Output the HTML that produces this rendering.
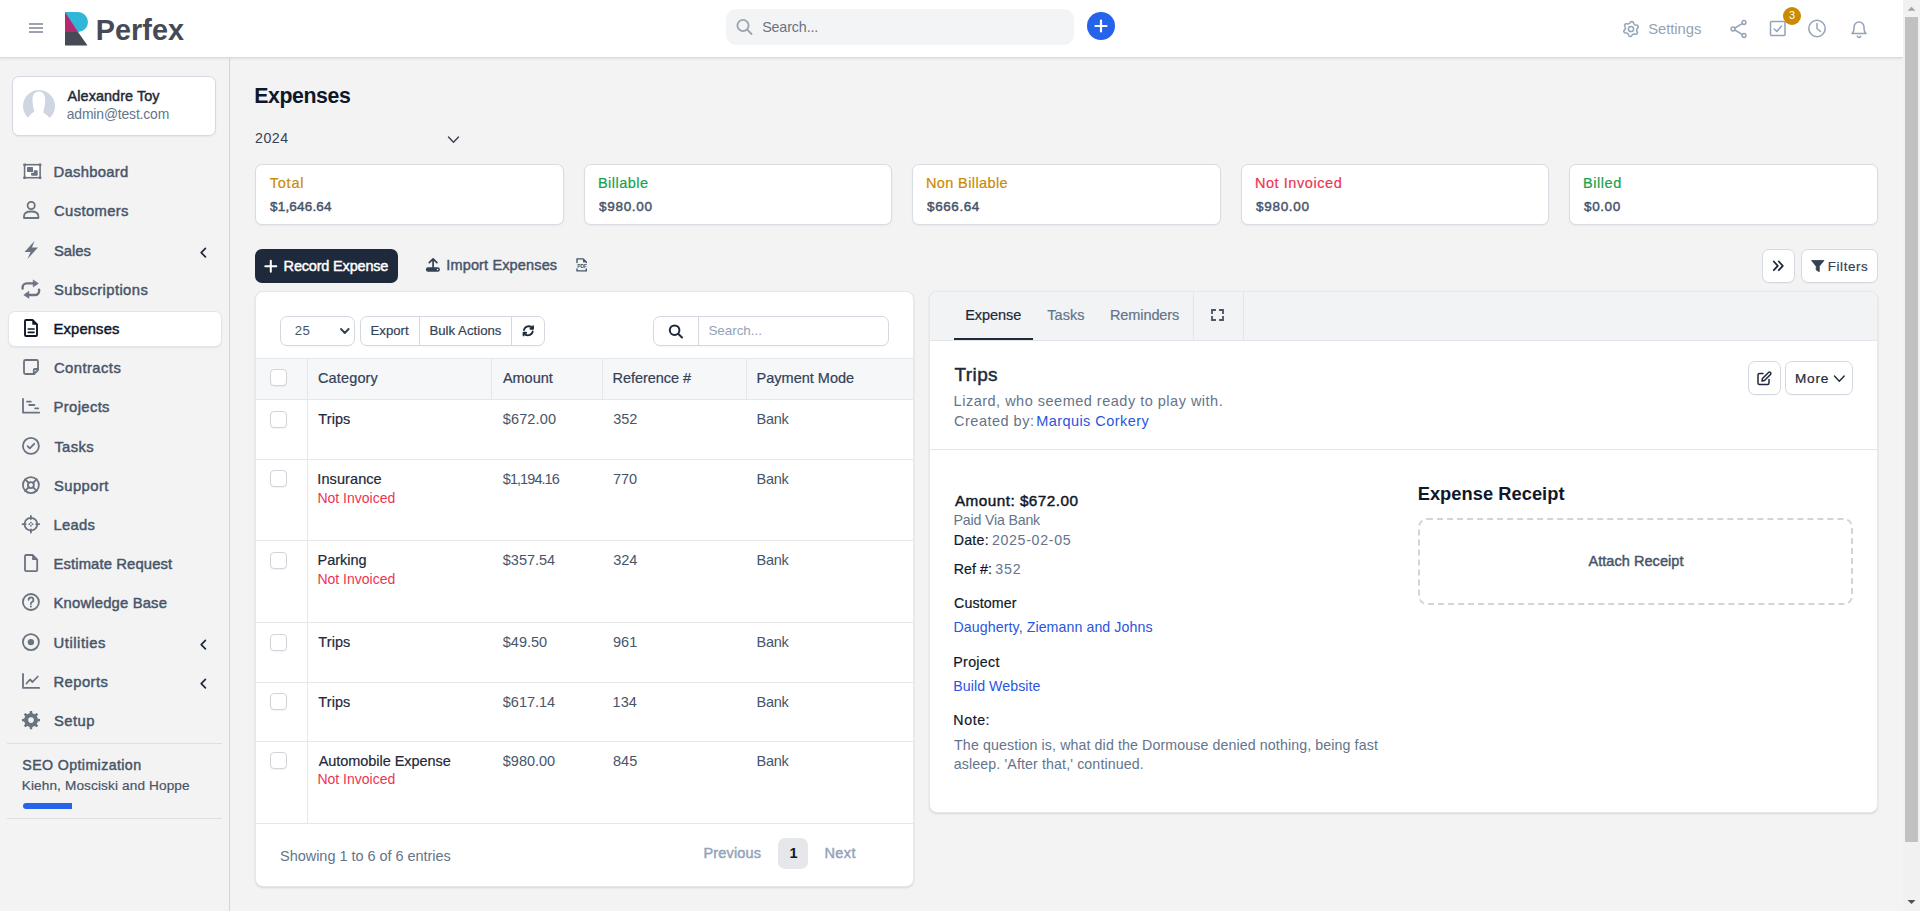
<!DOCTYPE html>
<html><head><meta charset="utf-8"><title>Expenses</title>
<style>
*{box-sizing:border-box;margin:0;padding:0}
html,body{width:1920px;height:911px;overflow:hidden}
body{font-family:"Liberation Sans",sans-serif;background:#f3f3f3;position:relative}
.b{position:absolute}
.t{position:absolute;white-space:nowrap}
svg{position:absolute;left:0;top:0}
</style></head><body>
<div class="b" style="left:0.00px;top:0.00px;width:1903.00px;height:58.00px;background:#fff;border-bottom:1px solid #dadada;box-shadow:0 1px 3px rgba(0,0,0,.07)"></div>
<div class="b" style="left:229.00px;top:58.00px;width:1.00px;height:853.00px;background:#cfd6e1"></div>
<div class="b" style="left:1903.00px;top:0.00px;width:17.00px;height:911.00px;background:#f1f1f1"></div>
<div class="b" style="left:1905.00px;top:17.00px;width:13.00px;height:825.00px;background:#c1c1c1"></div>
<div class="b" style="left:726.00px;top:9.00px;width:348.00px;height:36.00px;background:#f3f4f6;border-radius:10px"></div>
<div class="b" style="left:1087.00px;top:12.00px;width:28.00px;height:28.00px;background:#2563eb;border-radius:50%"></div>
<div class="b" style="left:1783.00px;top:7.00px;width:18.00px;height:18.00px;background:#ca8a04;border-radius:50%"></div>
<div class="b" style="left:12.00px;top:76.00px;width:204.00px;height:60.00px;background:#fff;border:1px solid #d5dae2;border-radius:7px;box-shadow:0 1px 2px rgba(0,0,0,.06)"></div>
<div class="b" style="left:23.00px;top:90.00px;width:32.00px;height:32.00px;background:#cfd6e2;border-radius:50%"></div>
<div class="b" style="left:8.00px;top:311.00px;width:214.00px;height:36.00px;background:#fff;border:1px solid #e1e4e9;border-radius:7px;box-shadow:0 1px 2px rgba(0,0,0,.06)"></div>
<div class="b" style="left:7.00px;top:743.00px;width:215.00px;height:1.00px;background:#dcdfe4"></div>
<div class="b" style="left:7.00px;top:818.00px;width:215.00px;height:1.00px;background:#dcdfe4"></div>
<div class="b" style="left:22.70px;top:803.00px;width:49.30px;height:6.00px;background:#2563eb;border-radius:3px 0 0 3px"></div>
<div class="b" style="left:255.00px;top:164.00px;width:309.00px;height:61.00px;background:#fff;border:1px solid #d8dce3;border-radius:7px;box-shadow:0 1px 2px rgba(0,0,0,.05)"></div>
<div class="b" style="left:584.00px;top:164.00px;width:308.00px;height:61.00px;background:#fff;border:1px solid #d8dce3;border-radius:7px;box-shadow:0 1px 2px rgba(0,0,0,.05)"></div>
<div class="b" style="left:912.00px;top:164.00px;width:309.00px;height:61.00px;background:#fff;border:1px solid #d8dce3;border-radius:7px;box-shadow:0 1px 2px rgba(0,0,0,.05)"></div>
<div class="b" style="left:1241.00px;top:164.00px;width:308.00px;height:61.00px;background:#fff;border:1px solid #d8dce3;border-radius:7px;box-shadow:0 1px 2px rgba(0,0,0,.05)"></div>
<div class="b" style="left:1569.00px;top:164.00px;width:309.00px;height:61.00px;background:#fff;border:1px solid #d8dce3;border-radius:7px;box-shadow:0 1px 2px rgba(0,0,0,.05)"></div>
<div class="b" style="left:255.00px;top:249.00px;width:143.00px;height:34.00px;background:#1e293b;border-radius:7px"></div>
<div class="b" style="left:1762.00px;top:249.00px;width:33.00px;height:34.00px;background:#fff;border:1px solid #d4d9e1;border-radius:7px;box-shadow:0 1px 1px rgba(0,0,0,.03)"></div>
<div class="b" style="left:1801.00px;top:249.00px;width:77.00px;height:34.00px;background:#fff;border:1px solid #d4d9e1;border-radius:7px;box-shadow:0 1px 1px rgba(0,0,0,.03)"></div>
<div class="b" style="left:255.00px;top:291.00px;width:659.00px;height:596.00px;background:#fff;border:1px solid #e5e7eb;border-radius:8px;box-shadow:0 1px 2px rgba(0,0,0,.12)"></div>
<div class="b" style="left:280.00px;top:316.00px;width:75.00px;height:30.00px;background:#fff;border:1px solid #d4d9e1;border-radius:7px;box-shadow:0 1px 1px rgba(0,0,0,.03)"></div>
<div class="b" style="left:360.00px;top:316.00px;width:185.00px;height:30.00px;background:#fff;border:1px solid #d4d9e1;border-radius:7px;box-shadow:0 1px 1px rgba(0,0,0,.03)"></div>
<div class="b" style="left:419.00px;top:316.00px;width:1.00px;height:30.00px;background:#d4d9e1"></div>
<div class="b" style="left:511.00px;top:316.00px;width:1.00px;height:30.00px;background:#d4d9e1"></div>
<div class="b" style="left:653.00px;top:316.00px;width:236.00px;height:30.00px;background:#fff;border:1px solid #d4d9e1;border-radius:7px;box-shadow:0 1px 1px rgba(0,0,0,.03)"></div>
<div class="b" style="left:698.00px;top:316.00px;width:1.00px;height:30.00px;background:#d4d9e1"></div>
<div class="b" style="left:256.00px;top:358.00px;width:657.00px;height:42.00px;background:#f6f7f9;border-top:1px solid #e5e7eb;border-bottom:1px solid #e5e7eb"></div>
<div class="b" style="left:307.00px;top:358.00px;width:1.00px;height:42.00px;background:#e5e7eb"></div>
<div class="b" style="left:491.00px;top:358.00px;width:1.00px;height:42.00px;background:#e5e7eb"></div>
<div class="b" style="left:602.00px;top:358.00px;width:1.00px;height:42.00px;background:#e5e7eb"></div>
<div class="b" style="left:746.00px;top:358.00px;width:1.00px;height:42.00px;background:#e5e7eb"></div>
<div class="b" style="left:256.00px;top:459.00px;width:657.00px;height:1.00px;background:#e5e7eb"></div>
<div class="b" style="left:256.00px;top:540.00px;width:657.00px;height:1.00px;background:#e5e7eb"></div>
<div class="b" style="left:256.00px;top:622.00px;width:657.00px;height:1.00px;background:#e5e7eb"></div>
<div class="b" style="left:256.00px;top:682.00px;width:657.00px;height:1.00px;background:#e5e7eb"></div>
<div class="b" style="left:256.00px;top:741.00px;width:657.00px;height:1.00px;background:#e5e7eb"></div>
<div class="b" style="left:256.00px;top:823.00px;width:657.00px;height:1.00px;background:#e5e7eb"></div>
<div class="b" style="left:307.00px;top:400.00px;width:1.00px;height:423.00px;background:#e5e7eb"></div>
<div class="b" style="left:270.00px;top:369.00px;width:17.00px;height:17.00px;background:#fff;border:1px solid #d1d5db;border-radius:4px;box-shadow:0 1px 1px rgba(0,0,0,.05)"></div>
<div class="b" style="left:270.00px;top:411.00px;width:17.00px;height:17.00px;background:#fff;border:1px solid #d1d5db;border-radius:4px;box-shadow:0 1px 1px rgba(0,0,0,.05)"></div>
<div class="b" style="left:270.00px;top:470.00px;width:17.00px;height:17.00px;background:#fff;border:1px solid #d1d5db;border-radius:4px;box-shadow:0 1px 1px rgba(0,0,0,.05)"></div>
<div class="b" style="left:270.00px;top:552.00px;width:17.00px;height:17.00px;background:#fff;border:1px solid #d1d5db;border-radius:4px;box-shadow:0 1px 1px rgba(0,0,0,.05)"></div>
<div class="b" style="left:270.00px;top:634.00px;width:17.00px;height:17.00px;background:#fff;border:1px solid #d1d5db;border-radius:4px;box-shadow:0 1px 1px rgba(0,0,0,.05)"></div>
<div class="b" style="left:270.00px;top:693.00px;width:17.00px;height:17.00px;background:#fff;border:1px solid #d1d5db;border-radius:4px;box-shadow:0 1px 1px rgba(0,0,0,.05)"></div>
<div class="b" style="left:270.00px;top:752.00px;width:17.00px;height:17.00px;background:#fff;border:1px solid #d1d5db;border-radius:4px;box-shadow:0 1px 1px rgba(0,0,0,.05)"></div>
<div class="b" style="left:778.00px;top:838.00px;width:30.00px;height:31.00px;background:#e5e7eb;border-radius:7px"></div>
<div class="b" style="left:929.00px;top:291.00px;width:949.00px;height:522.00px;background:#fff;border:1px solid #e5e7eb;border-radius:8px;box-shadow:0 1px 2px rgba(0,0,0,.12);overflow:hidden"></div>
<div class="b" style="left:930.00px;top:292.00px;width:947.00px;height:49.00px;background:#f2f3f5;border-bottom:1px solid #e2e5ea;border-radius:7px 7px 0 0"></div>
<div class="b" style="left:954.00px;top:338.00px;width:79.00px;height:2.00px;background:#1e293b"></div>
<div class="b" style="left:1193.00px;top:292.00px;width:1.00px;height:48.00px;background:#e2e5ea"></div>
<div class="b" style="left:1243.00px;top:292.00px;width:1.00px;height:48.00px;background:#e2e5ea"></div>
<div class="b" style="left:930.00px;top:449.00px;width:947.00px;height:1.00px;background:#e5e7eb"></div>
<div class="b" style="left:1748.00px;top:361.00px;width:33.00px;height:34.00px;background:#fff;border:1px solid #d4d9e1;border-radius:7px;box-shadow:0 1px 1px rgba(0,0,0,.03)"></div>
<div class="b" style="left:1785.00px;top:361.00px;width:68.00px;height:34.00px;background:#fff;border:1px solid #d4d9e1;border-radius:7px;box-shadow:0 1px 1px rgba(0,0,0,.03)"></div>
<div class="b" style="left:1418.00px;top:518.00px;width:435.00px;height:87.00px;border:2px dashed #d1d5db;border-radius:9px"></div>
<svg width="1920" height="911" viewBox="0 0 1920 911"><g fill="#9ca3af"><rect x="29" y="23" width="14" height="2"/><rect x="29" y="27" width="14" height="2"/><rect x="29" y="31" width="14" height="2"/></g>
<path d="M1907.5 10.8 L1911.5 6.8 L1915.5 10.8 Z" fill="#a3a3a3"/>
<path d="M1907.5 900 L1911.5 904 L1915.5 900 Z" fill="#505050"/>
<path d="M65 12 H78 A10 10 0 0 1 78 32 H75 Z" fill="#30b6d8"/>
<path d="M65 12 L78 32 L65 32 Z" fill="#b8286f"/>
<path d="M65 32 H78 L87.5 45.6 H65 Z" fill="#454a55"/>
<g fill="none" stroke="#9ca3af" stroke-width="1.8"><circle cx="743" cy="25.5" r="5.6"/><path d="M747.2 29.7 L751.5 34" stroke-linecap="round"/></g>
<g stroke="#fff" stroke-width="2.2" stroke-linecap="round"><path d="M1101 20.5 V31.5 M1095.5 26 H1106.5"/></g>
<g fill="none" stroke="#94a3b8" stroke-width="1.5" stroke-linecap="round" stroke-linejoin="round"><path d="M1631.00 21.40 L1632.97 21.66 L1633.90 23.98 L1635.10 24.90 L1637.58 25.20 L1638.34 27.03 L1636.80 29.00 L1636.60 30.50 L1637.58 32.80 L1636.37 34.37 L1633.90 34.02 L1632.50 34.60 L1631.00 36.60 L1629.03 36.34 L1628.10 34.02 L1626.90 33.10 L1624.42 32.80 L1623.66 30.97 L1625.20 29.00 L1625.40 27.50 L1624.42 25.20 L1625.63 23.63 L1628.10 23.98 L1629.50 23.40 Z"/><circle cx="1631" cy="29" r="2.6"/></g>
<g fill="none" stroke="#94a3b8" stroke-width="1.5" stroke-linecap="round" stroke-linejoin="round"><circle cx="1733" cy="29" r="1.9"/><circle cx="1744" cy="22.5" r="1.9"/><circle cx="1744" cy="35.5" r="1.9"/><path d="M1734.8 28 L1742.2 23.6 M1734.8 30 L1742.2 34.4"/></g>
<g fill="none" stroke="#94a3b8" stroke-width="1.5" stroke-linecap="round" stroke-linejoin="round"><rect x="1770.5" y="21.5" width="14.5" height="14" rx="1"/><path d="M1774.2 29 L1776.8 31.5 L1781.5 26"/></g>
<g fill="none" stroke="#94a3b8" stroke-width="1.5" stroke-linecap="round" stroke-linejoin="round"><circle cx="1817" cy="28.5" r="8.2"/><path d="M1817 23.5 V28.5 L1820.5 31.5"/></g>
<g fill="none" stroke="#94a3b8" stroke-width="1.5" stroke-linecap="round" stroke-linejoin="round"><path d="M1852 33.5 H1866 C1864.6 32.2 1864 30.8 1864 28.5 V27 A5 5 0 0 0 1854 27 V28.5 C1854 30.8 1853.4 32.2 1852 33.5 Z"/><path d="M1857.3 36.3 A1.8 1.8 0 0 0 1860.7 36.3"/></g>
<rect x="24.6" y="164.7" width="15.5" height="13" fill="#fff" stroke="#6b7280" stroke-width="1.6"/>
<rect x="23.30" y="163.40" width="2.6" height="2.6" rx="0.5" fill="#6b7280"/>
<rect x="38.80" y="163.40" width="2.6" height="2.6" rx="0.5" fill="#6b7280"/>
<rect x="23.30" y="176.40" width="2.6" height="2.6" rx="0.5" fill="#6b7280"/>
<rect x="38.80" y="176.40" width="2.6" height="2.6" rx="0.5" fill="#6b7280"/>
<rect x="31.1" y="170.3" width="6.6" height="5.4" rx="0.8" fill="#6b7280"/><rect x="30.2" y="169.4" width="3.6" height="3.4" fill="#fff"/><rect x="27" y="167.1" width="6" height="4.9" rx="0.6" fill="#6b7280"/>
<g fill="none" stroke="#6b7280" stroke-width="1.8" stroke-linecap="round" stroke-linejoin="round"><circle cx="31.2" cy="205.5" r="3.6"/><path d="M24 218 V216.5 C24 213 27 211.5 31.2 211.5 C35.4 211.5 38.4 213 38.4 216.5 V218 Z"/></g>
<path d="M34.5 241 L24.5 252 H30.5 L27.5 259 L38 247.5 H32 Z" fill="#6b7280"/>
<g fill="none" stroke="#6b7280" stroke-width="2.4" stroke-linecap="round" stroke-linejoin="round"><path d="M22.6 288.6 V287.4 A4 4 0 0 1 26.6 283.4 H34"/><path d="M39.1 289.8 V291 A4 4 0 0 1 35.1 295 H28"/></g><path d="M33.2 279.9 L38.4 283.4 L33.2 286.9 Z M28.9 291.3 L23.8 294.9 L28.9 298.3 Z" fill="#6b7280" stroke="#6b7280" stroke-width="0.6" stroke-linejoin="round"/>
<g fill="none" stroke="#0f172a" stroke-width="1.9" stroke-linejoin="round"><path d="M26 320 H32.5 L37 324.5 V335 A1 1 0 0 1 36 336 H26 A1 1 0 0 1 25 335 V321 A1 1 0 0 1 26 320 Z"/></g><path d="M32.3 320 L37 324.8 H32.3 Z" fill="#0f172a"/><g stroke="#0f172a" stroke-width="1.7" stroke-linecap="round"><path d="M28.3 329 H34 M28.3 332.3 H34"/></g>
<g fill="none" stroke="#6b7280" stroke-width="1.8" stroke-linecap="round" stroke-linejoin="round"><path d="M25.5 360 H36.5 A1.5 1.5 0 0 1 38 361.5 V370 L34 374 H25.5 A1.5 1.5 0 0 1 24 372.5 V361.5 A1.5 1.5 0 0 1 25.5 360 Z"/><path d="M38 369 H34.8 A1 1 0 0 0 33.8 370 V374"/></g>
<g fill="none" stroke="#6b7280" stroke-width="1.8" stroke-linecap="round" stroke-linejoin="round" stroke-width="1.9"><path d="M23 398.8 V412.6 H39.3"/><path d="M27 401.7 H30.8 M29.2 405 H34.4 M35.2 408.4 H38.2"/></g>
<g fill="none" stroke="#6b7280" stroke-width="1.8" stroke-linecap="round" stroke-linejoin="round" stroke-width="1.6"><circle cx="30.9" cy="445.9" r="8"/><path d="M27.6 446.2 L29.8 448.3 L34.2 443.8"/></g>
<g fill="none" stroke="#6b7280" stroke-width="1.8" stroke-linecap="round" stroke-linejoin="round" stroke-width="1.6"><circle cx="30.9" cy="485.1" r="8"/><circle cx="30.9" cy="485.1" r="3"/><path d="M25.2 479.4 L28.8 483 M33 483 L36.6 479.4 M33 487.2 L36.6 490.8 M28.8 487.2 L25.2 490.8"/></g>
<g fill="none" stroke="#6b7280" stroke-width="1.8" stroke-linecap="round" stroke-linejoin="round" stroke-width="2.3"><circle cx="30.9" cy="524.2" r="6.4"/><path d="M30.9 515.9 V519 M30.9 529.4 V532.5 M22.6 524.2 H25.7 M36.1 524.2 H39.2"/></g><g fill="#6b7280"><circle cx="30.9" cy="522.6" r="0.9"/><circle cx="30.9" cy="525.8" r="0.9"/><circle cx="29.3" cy="524.2" r="0.9"/><circle cx="32.5" cy="524.2" r="0.9"/></g>
<g fill="none" stroke="#6b7280" stroke-width="1.8" stroke-linecap="round" stroke-linejoin="round"><path d="M26 555 H32.5 L37.2 559.7 V570 A1.2 1.2 0 0 1 36 571.2 H26.2 A1.2 1.2 0 0 1 25 570 V556.2 A1.2 1.2 0 0 1 26 555 Z"/></g><path d="M32.2 555 L37.2 560 H32.2 Z" fill="#6b7280"/>
<g fill="none" stroke="#6b7280" stroke-width="1.8" stroke-linecap="round" stroke-linejoin="round" stroke-width="1.6"><circle cx="30.9" cy="602" r="8"/><path d="M28.6 599.8 A2.4 2.4 0 1 1 31.6 602.2 C31.1 602.5 30.9 602.9 30.9 603.6 V604"/></g><circle cx="30.9" cy="606.4" r="1" fill="#6b7280"/>
<g fill="none" stroke="#6b7280" stroke-width="1.8" stroke-linecap="round" stroke-linejoin="round" stroke-width="1.6"><circle cx="30.9" cy="642.1" r="8"/></g><circle cx="30.9" cy="642.1" r="3.2" fill="#6b7280"/>
<g fill="none" stroke="#6b7280" stroke-width="1.8" stroke-linecap="round" stroke-linejoin="round" stroke-width="1.9"><path d="M23 674 V687.9 H39.2"/><path d="M26.5 683.5 L30 679.5 L32.5 682 L37.8 676.5"/></g>
<path d="M37.87 718.73 L40.03 718.96 L40.03 721.24 L37.87 721.47 L36.82 723.99 L38.19 725.68 L36.58 727.29 L34.89 725.92 L32.37 726.97 L32.14 729.13 L29.86 729.13 L29.63 726.97 L27.11 725.92 L25.42 727.29 L23.81 725.68 L25.18 723.99 L24.13 721.47 L21.97 721.24 L21.97 718.96 L24.13 718.73 L25.18 716.21 L23.81 714.52 L25.42 712.91 L27.11 714.28 L29.63 713.23 L29.86 711.07 L32.14 711.07 L32.37 713.23 L34.89 714.28 L36.58 712.91 L38.19 714.52 L36.82 716.21 Z" fill="#6b7280"/><circle cx="31" cy="720.1" r="2.8" fill="#f3f3f3"/>
<path d="M205.4 248.3 L201.2 252.6 L205.4 256.9" fill="none" stroke="#1e293b" stroke-width="1.7" stroke-linecap="round" stroke-linejoin="round"/>
<path d="M205.4 640.3 L201.2 644.6 L205.4 648.9" fill="none" stroke="#1e293b" stroke-width="1.7" stroke-linecap="round" stroke-linejoin="round"/>
<path d="M205.4 679.3 L201.2 683.6 L205.4 687.9" fill="none" stroke="#1e293b" stroke-width="1.7" stroke-linecap="round" stroke-linejoin="round"/>
<path d="M32.5 100 C32.5 95 34.5 91.7 38.8 91.6 C43 91.6 45.2 95 45.2 100 C45.2 103 44.8 106 44.2 108 C43.7 110 43.3 111.5 43.6 113 C45.5 114 48 115.5 50 118.5 L27.8 118.5 C29.5 115.5 32 113 34.6 111.3 L33.6 109 C33.3 107 32.4 104 32.5 100 Z" fill="#fff"/><rect x="22" y="117.8" width="34" height="6" fill="#fff"/>
<path d="M448.5 137 L453.5 142.3 L458.5 137" fill="none" stroke="#374151" stroke-width="1.4" stroke-linecap="round" stroke-linejoin="round"/>
<path d="M270.8 260.8 V271.8 M265.3 266.3 H276.3" stroke="#fff" stroke-width="2" stroke-linecap="round"/>
<g fill="none" stroke="#334155" stroke-width="1.7" stroke-linecap="round" stroke-linejoin="round"><path d="M433.1 267.5 V259.2 M429.3 262.6 L433.1 258.9 L436.9 262.6"/></g><rect x="425.9" y="267.2" width="14" height="4.6" rx="2.2" fill="#334155"/><circle cx="437.6" cy="269.5" r="0.7" fill="#f3f3f3"/>
<g fill="none" stroke="#475569" stroke-width="1.4" stroke-linejoin="round" stroke-linecap="round"><path d="M577 262.5 V258.9 H583.2 L586.3 262 V262.5"/><path d="M577 269 V270.9 H586.3 V269"/></g><path d="M583 258.9 L586.3 262.2 H583 Z" fill="#475569"/><text x="582" y="268" font-size="5" font-weight="bold" fill="#475569" text-anchor="middle" font-family="Liberation Sans" letter-spacing="-0.2">PDF</text>
<g fill="none" stroke="#1e293b" stroke-width="1.8" stroke-linecap="round" stroke-linejoin="round"><path d="M1773.8 261.5 L1777.8 265.8 L1773.8 270.2 M1778.8 261.5 L1782.8 265.8 L1778.8 270.2"/></g>
<path d="M1811.5 260.5 H1824 L1819.3 266.3 V271.7 L1816.2 270 V266.3 Z" fill="#334155" stroke="#334155" stroke-width="0.8" stroke-linejoin="round"/>
<path d="M341 329 L344.8 333 L348.6 329" fill="none" stroke="#334155" stroke-width="1.9" stroke-linecap="round" stroke-linejoin="round"/>
<g transform="translate(528.5 330.7) scale(0.9) translate(-528.5 -330.7)" fill="none" stroke="#1e293b" stroke-width="2" stroke-linecap="round" stroke-linejoin="round"><path d="M523.5 330 A5.3 5.3 0 0 1 533 328"/><path d="M533.6 325.6 V328.6 H530.6"/><path d="M533.2 331.5 A5.3 5.3 0 0 1 523.6 333.5"/><path d="M523 336 V333 H526"/></g>
<g fill="none" stroke="#1e293b" stroke-width="2"><circle cx="674.6" cy="330.2" r="4.8"/><path d="M678.2 333.8 L682 337.5" stroke-linecap="round"/></g>
<g fill="none" stroke="#475569" stroke-width="1.8" stroke-linecap="square"><path d="M1212 313 V310 H1215 M1220 310 H1223 V313 M1223 317 V320 H1220 M1215 320 H1212 V317"/></g>
<g fill="none" stroke="#1e293b" stroke-width="1.5" stroke-linecap="round" stroke-linejoin="round"><path d="M1763 373.5 H1759.5 A1.5 1.5 0 0 0 1758 375 V383 A1.5 1.5 0 0 0 1759.5 384.5 H1767.5 A1.5 1.5 0 0 0 1769 383 V379.5"/><path d="M1768.5 372.5 A1.4 1.4 0 0 1 1770.5 374.5 L1764.5 380.5 L1762 381 L1762.5 378.5 Z"/></g>
<path d="M1834.5 376 L1839.3 381.3 L1844.2 376" fill="none" stroke="#1e293b" stroke-width="1.4" stroke-linecap="round" stroke-linejoin="round"/></svg>
<div class="t" style="left:95.65px;top:16px;font-size:28.8px;line-height:28.8px;color:#454a55;font-weight:bold;letter-spacing:0.060px;">Perfex</div>
<div class="t" style="left:762.15px;top:20px;font-size:14.3px;line-height:14.3px;color:#6b7280;letter-spacing:-0.131px;">Search...</div>
<div class="t" style="left:1648.20px;top:22px;font-size:14.8px;line-height:14.8px;color:#94a3b8;letter-spacing:-0.036px;">Settings</div>
<div class="t" style="left:67.58px;top:89px;font-size:14.4px;line-height:14.4px;color:#1e293b;-webkit-text-stroke:0.45px #1e293b;letter-spacing:0.088px;">Alexandre Toy</div>
<div class="t" style="left:66.80px;top:108px;font-size:13.9px;line-height:13.9px;color:#64748b;letter-spacing:-0.150px;">admin@test.com</div>
<div class="t" style="left:53.52px;top:165px;font-size:14.8px;line-height:14.8px;color:#475569;-webkit-text-stroke:0.45px #475569;letter-spacing:0.294px;">Dashboard</div>
<div class="t" style="left:53.98px;top:204px;font-size:14.8px;line-height:14.8px;color:#475569;-webkit-text-stroke:0.45px #475569;letter-spacing:0.375px;">Customers</div>
<div class="t" style="left:54.02px;top:244px;font-size:14.8px;line-height:14.8px;color:#475569;-webkit-text-stroke:0.45px #475569;letter-spacing:-0.050px;">Sales</div>
<div class="t" style="left:54.02px;top:283px;font-size:14.8px;line-height:14.8px;color:#475569;-webkit-text-stroke:0.45px #475569;letter-spacing:0.413px;">Subscriptions</div>
<div class="t" style="left:53.52px;top:322px;font-size:14.8px;line-height:14.8px;color:#0f172a;-webkit-text-stroke:0.45px #0f172a;letter-spacing:0.129px;">Expenses</div>
<div class="t" style="left:53.98px;top:361px;font-size:14.8px;line-height:14.8px;color:#475569;-webkit-text-stroke:0.45px #475569;letter-spacing:0.438px;">Contracts</div>
<div class="t" style="left:53.52px;top:400px;font-size:14.8px;line-height:14.8px;color:#475569;-webkit-text-stroke:0.45px #475569;letter-spacing:0.364px;">Projects</div>
<div class="t" style="left:54.38px;top:440px;font-size:14.8px;line-height:14.8px;color:#475569;-webkit-text-stroke:0.45px #475569;letter-spacing:0.350px;">Tasks</div>
<div class="t" style="left:54.02px;top:479px;font-size:14.8px;line-height:14.8px;color:#475569;-webkit-text-stroke:0.45px #475569;letter-spacing:0.417px;">Support</div>
<div class="t" style="left:53.52px;top:518px;font-size:14.8px;line-height:14.8px;color:#475569;-webkit-text-stroke:0.45px #475569;letter-spacing:0.238px;">Leads</div>
<div class="t" style="left:53.52px;top:557px;font-size:14.8px;line-height:14.8px;color:#475569;-webkit-text-stroke:0.45px #475569;letter-spacing:0.123px;">Estimate Request</div>
<div class="t" style="left:53.52px;top:596px;font-size:14.8px;line-height:14.8px;color:#475569;-webkit-text-stroke:0.45px #475569;letter-spacing:0.181px;">Knowledge Base</div>
<div class="t" style="left:53.58px;top:636px;font-size:14.8px;line-height:14.8px;color:#475569;-webkit-text-stroke:0.45px #475569;letter-spacing:0.531px;">Utilities</div>
<div class="t" style="left:53.52px;top:675px;font-size:14.8px;line-height:14.8px;color:#475569;-webkit-text-stroke:0.45px #475569;letter-spacing:0.417px;">Reports</div>
<div class="t" style="left:54.02px;top:714px;font-size:14.8px;line-height:14.8px;color:#475569;-webkit-text-stroke:0.45px #475569;letter-spacing:0.450px;">Setup</div>
<div class="t" style="left:22.27px;top:758px;font-size:14.2px;line-height:14.2px;color:#475569;-webkit-text-stroke:0.45px #475569;letter-spacing:0.400px;">SEO Optimization</div>
<div class="t" style="left:21.70px;top:779px;font-size:13.6px;line-height:13.6px;color:#475569;-webkit-text-stroke:0.20px #475569;letter-spacing:0.133px;">Kiehn, Mosciski and Hoppe</div>
<div class="t" style="left:254.25px;top:86px;font-size:21.3px;line-height:21.3px;color:#0f172a;font-weight:bold;letter-spacing:-0.414px;">Expenses</div>
<div class="t" style="left:255.00px;top:131px;font-size:14.2px;line-height:14.2px;color:#374151;letter-spacing:0.500px;">2024</div>
<div class="t" style="left:269.75px;top:176px;font-size:14.5px;line-height:14.5px;color:#ca8a04;-webkit-text-stroke:0.20px #ca8a04;letter-spacing:0.775px;">Total</div>
<div class="t" style="left:270.07px;top:200px;font-size:13.5px;line-height:13.5px;color:#475569;-webkit-text-stroke:0.45px #475569;letter-spacing:0.181px;">$1,646.64</div>
<div class="t" style="left:597.90px;top:176px;font-size:14.5px;line-height:14.5px;color:#16a34a;-webkit-text-stroke:0.20px #16a34a;letter-spacing:0.486px;">Billable</div>
<div class="t" style="left:599.08px;top:200px;font-size:13.5px;line-height:13.5px;color:#475569;-webkit-text-stroke:0.45px #475569;letter-spacing:0.683px;">$980.00</div>
<div class="t" style="left:925.90px;top:176px;font-size:14.5px;line-height:14.5px;color:#ca8a04;-webkit-text-stroke:0.20px #ca8a04;letter-spacing:0.400px;">Non Billable</div>
<div class="t" style="left:927.08px;top:200px;font-size:13.5px;line-height:13.5px;color:#475569;-webkit-text-stroke:0.45px #475569;letter-spacing:0.583px;">$666.64</div>
<div class="t" style="left:1254.90px;top:176px;font-size:14.5px;line-height:14.5px;color:#ec3553;-webkit-text-stroke:0.20px #ec3553;letter-spacing:0.564px;">Not Invoiced</div>
<div class="t" style="left:1256.08px;top:200px;font-size:13.5px;line-height:13.5px;color:#475569;-webkit-text-stroke:0.45px #475569;letter-spacing:0.683px;">$980.00</div>
<div class="t" style="left:1582.90px;top:176px;font-size:14.5px;line-height:14.5px;color:#16a34a;-webkit-text-stroke:0.20px #16a34a;letter-spacing:0.570px;">Billed</div>
<div class="t" style="left:1584.08px;top:200px;font-size:13.5px;line-height:13.5px;color:#475569;-webkit-text-stroke:0.45px #475569;letter-spacing:0.587px;">$0.00</div>
<div class="t" style="left:283.62px;top:259px;font-size:14.5px;line-height:14.5px;color:#fff;-webkit-text-stroke:0.45px #fff;letter-spacing:-0.185px;">Record Expense</div>
<div class="t" style="left:446.27px;top:258px;font-size:14.5px;line-height:14.5px;color:#475569;-webkit-text-stroke:0.45px #475569;letter-spacing:0.146px;">Import Expenses</div>
<div class="t" style="left:1827.80px;top:260px;font-size:13.4px;line-height:13.4px;color:#334155;-webkit-text-stroke:0.20px #334155;letter-spacing:0.583px;">Filters</div>
<div class="t" style="left:294.75px;top:324px;font-size:13.2px;line-height:13.2px;color:#475569;letter-spacing:0.400px;">25</div>
<div class="t" style="left:370.50px;top:324px;font-size:13.2px;line-height:13.2px;color:#334155;-webkit-text-stroke:0.20px #334155;letter-spacing:0.010px;">Export</div>
<div class="t" style="left:429.40px;top:324px;font-size:13.2px;line-height:13.2px;color:#334155;-webkit-text-stroke:0.20px #334155;letter-spacing:0.018px;">Bulk Actions</div>
<div class="t" style="left:708.40px;top:324px;font-size:13.4px;line-height:13.4px;color:#94a3b8;">Search...</div>
<div class="t" style="left:317.95px;top:371px;font-size:14.5px;line-height:14.5px;color:#334155;-webkit-text-stroke:0.20px #334155;letter-spacing:0.150px;">Category</div>
<div class="t" style="left:502.95px;top:371px;font-size:14.5px;line-height:14.5px;color:#334155;-webkit-text-stroke:0.20px #334155;letter-spacing:-0.040px;">Amount</div>
<div class="t" style="left:612.60px;top:371px;font-size:14.5px;line-height:14.5px;color:#334155;-webkit-text-stroke:0.20px #334155;letter-spacing:-0.045px;">Reference #</div>
<div class="t" style="left:756.60px;top:371px;font-size:14.5px;line-height:14.5px;color:#334155;-webkit-text-stroke:0.20px #334155;">Payment Mode</div>
<div class="t" style="left:318.35px;top:412px;font-size:14.5px;line-height:14.5px;color:#1e293b;-webkit-text-stroke:0.20px #1e293b;letter-spacing:0.075px;">Trips</div>
<div class="t" style="left:502.75px;top:412px;font-size:14.5px;line-height:14.5px;color:#475569;letter-spacing:0.133px;">$672.00</div>
<div class="t" style="left:613.15px;top:412px;font-size:14.5px;line-height:14.5px;color:#475569;">352</div>
<div class="t" style="left:756.50px;top:412px;font-size:14.5px;line-height:14.5px;color:#475569;letter-spacing:-0.283px;">Bank</div>
<div class="t" style="left:317.35px;top:472px;font-size:14.5px;line-height:14.5px;color:#1e293b;-webkit-text-stroke:0.20px #1e293b;letter-spacing:0.081px;">Insurance</div>
<div class="t" style="left:317.45px;top:491px;font-size:14.0px;line-height:14.0px;color:#ec3553;">Not Invoiced</div>
<div class="t" style="left:502.75px;top:472px;font-size:14.5px;line-height:14.5px;color:#475569;letter-spacing:-0.931px;">$1,194.16</div>
<div class="t" style="left:612.95px;top:472px;font-size:14.5px;line-height:14.5px;color:#475569;">770</div>
<div class="t" style="left:756.50px;top:472px;font-size:14.5px;line-height:14.5px;color:#475569;letter-spacing:-0.283px;">Bank</div>
<div class="t" style="left:317.50px;top:553px;font-size:14.5px;line-height:14.5px;color:#1e293b;-webkit-text-stroke:0.20px #1e293b;">Parking</div>
<div class="t" style="left:317.45px;top:572px;font-size:14.0px;line-height:14.0px;color:#ec3553;">Not Invoiced</div>
<div class="t" style="left:502.75px;top:553px;font-size:14.5px;line-height:14.5px;color:#475569;">$357.54</div>
<div class="t" style="left:613.15px;top:553px;font-size:14.5px;line-height:14.5px;color:#475569;">324</div>
<div class="t" style="left:756.50px;top:553px;font-size:14.5px;line-height:14.5px;color:#475569;letter-spacing:-0.283px;">Bank</div>
<div class="t" style="left:318.35px;top:635px;font-size:14.5px;line-height:14.5px;color:#1e293b;-webkit-text-stroke:0.20px #1e293b;letter-spacing:0.075px;">Trips</div>
<div class="t" style="left:502.75px;top:635px;font-size:14.5px;line-height:14.5px;color:#475569;">$49.50</div>
<div class="t" style="left:613.00px;top:635px;font-size:14.5px;line-height:14.5px;color:#475569;">961</div>
<div class="t" style="left:756.50px;top:635px;font-size:14.5px;line-height:14.5px;color:#475569;letter-spacing:-0.283px;">Bank</div>
<div class="t" style="left:318.35px;top:695px;font-size:14.5px;line-height:14.5px;color:#1e293b;-webkit-text-stroke:0.20px #1e293b;letter-spacing:0.075px;">Trips</div>
<div class="t" style="left:502.75px;top:695px;font-size:14.5px;line-height:14.5px;color:#475569;">$617.14</div>
<div class="t" style="left:612.60px;top:695px;font-size:14.5px;line-height:14.5px;color:#475569;">134</div>
<div class="t" style="left:756.50px;top:695px;font-size:14.5px;line-height:14.5px;color:#475569;letter-spacing:-0.283px;">Bank</div>
<div class="t" style="left:318.65px;top:754px;font-size:14.5px;line-height:14.5px;color:#1e293b;-webkit-text-stroke:0.20px #1e293b;letter-spacing:-0.047px;">Automobile Expense</div>
<div class="t" style="left:317.45px;top:772px;font-size:14.0px;line-height:14.0px;color:#ec3553;">Not Invoiced</div>
<div class="t" style="left:502.75px;top:754px;font-size:14.5px;line-height:14.5px;color:#475569;">$980.00</div>
<div class="t" style="left:613.05px;top:754px;font-size:14.5px;line-height:14.5px;color:#475569;">845</div>
<div class="t" style="left:756.50px;top:754px;font-size:14.5px;line-height:14.5px;color:#475569;letter-spacing:-0.283px;">Bank</div>
<div class="t" style="left:280.05px;top:849px;font-size:14.5px;line-height:14.5px;color:#64748b;letter-spacing:-0.035px;">Showing 1 to 6 of 6 entries</div>
<div class="t" style="left:703.42px;top:846px;font-size:14.5px;line-height:14.5px;color:#94a3b8;-webkit-text-stroke:0.45px #94a3b8;letter-spacing:0.171px;">Previous</div>
<div class="t" style="left:789.50px;top:846px;font-size:14.5px;line-height:14.5px;color:#0f172a;font-weight:bold;">1</div>
<div class="t" style="left:824.42px;top:846px;font-size:14.5px;line-height:14.5px;color:#94a3b8;-webkit-text-stroke:0.45px #94a3b8;letter-spacing:0.450px;">Next</div>
<div class="t" style="left:965.15px;top:308px;font-size:14.5px;line-height:14.5px;color:#1e293b;-webkit-text-stroke:0.20px #1e293b;letter-spacing:-0.042px;">Expense</div>
<div class="t" style="left:1047.25px;top:308px;font-size:14.5px;line-height:14.5px;color:#64748b;-webkit-text-stroke:0.20px #64748b;letter-spacing:0.037px;">Tasks</div>
<div class="t" style="left:1109.90px;top:308px;font-size:14.5px;line-height:14.5px;color:#64748b;-webkit-text-stroke:0.20px #64748b;letter-spacing:-0.081px;">Reminders</div>
<div class="t" style="left:954.57px;top:365px;font-size:19.0px;line-height:19.0px;color:#1e293b;-webkit-text-stroke:0.45px #1e293b;letter-spacing:0.375px;">Trips</div>
<div class="t" style="left:953.60px;top:394px;font-size:14.5px;line-height:14.5px;color:#64748b;letter-spacing:0.499px;">Lizard, who seemed ready to play with.</div>
<div class="t" style="left:954.05px;top:414px;font-size:14.5px;line-height:14.5px;color:#64748b;letter-spacing:0.490px;">Created by:</div>
<div class="t" style="left:1036.20px;top:414px;font-size:14.5px;line-height:14.5px;color:#2a55e0;letter-spacing:0.436px;">Marquis Corkery</div>
<div class="t" style="left:1794.90px;top:372px;font-size:13.6px;line-height:13.6px;color:#1e293b;-webkit-text-stroke:0.20px #1e293b;letter-spacing:0.850px;">More</div>
<div class="t" style="left:954.88px;top:493px;font-size:15.3px;line-height:15.3px;color:#0f172a;-webkit-text-stroke:0.45px #0f172a;letter-spacing:0.475px;">Amount: $672.00</div>
<div class="t" style="left:953.55px;top:513px;font-size:14.2px;line-height:14.2px;color:#64748b;letter-spacing:-0.183px;">Paid Via Bank</div>
<div class="t" style="left:953.65px;top:533px;font-size:14.2px;line-height:14.2px;color:#0f172a;-webkit-text-stroke:0.20px #0f172a;letter-spacing:0.275px;">Date:</div>
<div class="t" style="left:991.90px;top:533px;font-size:14.2px;line-height:14.2px;color:#64748b;letter-spacing:0.683px;">2025-02-05</div>
<div class="t" style="left:953.65px;top:562px;font-size:14.2px;line-height:14.2px;color:#0f172a;-webkit-text-stroke:0.20px #0f172a;letter-spacing:0.110px;">Ref #:</div>
<div class="t" style="left:995.15px;top:562px;font-size:14.2px;line-height:14.2px;color:#64748b;letter-spacing:0.875px;">352</div>
<div class="t" style="left:954.10px;top:596px;font-size:14.2px;line-height:14.2px;color:#0f172a;-webkit-text-stroke:0.20px #0f172a;letter-spacing:0.143px;">Customer</div>
<div class="t" style="left:953.55px;top:620px;font-size:14.2px;line-height:14.2px;color:#2a55e0;letter-spacing:0.076px;">Daugherty, Ziemann and Johns</div>
<div class="t" style="left:953.35px;top:655px;font-size:14.2px;line-height:14.2px;color:#0f172a;-webkit-text-stroke:0.20px #0f172a;letter-spacing:0.308px;">Project</div>
<div class="t" style="left:953.25px;top:679px;font-size:14.2px;line-height:14.2px;color:#2a55e0;letter-spacing:0.062px;">Build Website</div>
<div class="t" style="left:953.35px;top:713px;font-size:14.2px;line-height:14.2px;color:#0f172a;-webkit-text-stroke:0.20px #0f172a;letter-spacing:0.575px;">Note:</div>
<div class="t" style="left:954.10px;top:738px;font-size:14.2px;line-height:14.2px;color:#64748b;letter-spacing:0.114px;">The question is, what did the Dormouse denied nothing, being fast</div>
<div class="t" style="left:953.80px;top:757px;font-size:14.2px;line-height:14.2px;color:#64748b;letter-spacing:0.126px;">asleep. &#x27;After that,&#x27; continued.</div>
<div class="t" style="left:1417.70px;top:485px;font-size:18.3px;line-height:18.3px;color:#0f172a;font-weight:bold;letter-spacing:0.036px;">Expense Receipt</div>
<div class="t" style="left:1588.47px;top:554px;font-size:14.5px;line-height:14.5px;color:#475569;-webkit-text-stroke:0.45px #475569;letter-spacing:0.050px;">Attach Receipt</div>
<div class="t" style="left:1783px;top:9.5px;width:18px;text-align:center;font-size:11px;line-height:11px;color:#fff">3</div>
</body></html>
